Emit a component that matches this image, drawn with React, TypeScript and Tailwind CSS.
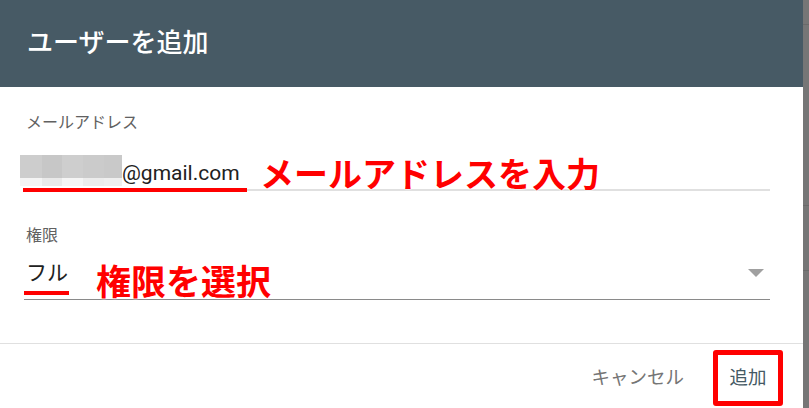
import { useState } from "react";

const jp = "font-['Roboto','Noto_Sans_CJK_JP',sans-serif]";

// pixelated blur that hides the local part of the address
const blurTop = ["bg-[#cdcdcd]", "bg-[#c7c7c7]", "bg-[#cecece]", "bg-[#cbcbcb]", "bg-[#c9c9c9]"];
const blurBottom = ["bg-[#f4f4f4]", "bg-[#e9e9e9]", "bg-[#f5f5f5]", "bg-[#ececec]", "bg-[#efefef]"];
const blurWidths = ["w-[22px]", "w-[20px]", "w-[21px]", "w-[21px]", "w-[18px]"];

function BlurBlock() {
  return (
    <div className="flex h-[31px] ml-[-4px] shrink-0">
      {blurWidths.map((w, i) => (
        <div key={i} className={`flex flex-col ${w}`}>
          <div className={`h-[23px] ${blurTop[i]}`} />
          <div className={`h-[8px] ${blurBottom[i]}`} />
        </div>
      ))}
    </div>
  );
}

function Note({ text, className }: { text: string; className: string }) {
  return (
    <span
      className={`absolute whitespace-nowrap text-[34px] leading-none font-bold text-[#ff0000] font-['Noto_Sans_CJK_JP',sans-serif] [text-shadow:0_0_2px_#fff,0_0_2px_#fff] ${className}`}
    >
      {text}
    </span>
  );
}

export default function App() {
  const [role] = useState("フル");

  return (
    <div className={`flex w-[809px] h-[408px] overflow-hidden bg-white ${jp}`}>
      <div className="flex flex-col w-[803px] h-full bg-white">
        {/* Header */}
        <div className="h-[87px] bg-[#475a65] flex items-center pl-[27px] pb-[2px]">
          <h1 className="text-white text-[26px] font-medium leading-none">ユーザーを追加</h1>
        </div>

        {/* Body */}
        <div className="flex flex-col pl-[24px] pr-[33px] pt-[28px] pb-[43px]">
          {/* Email field */}
          <label className="pl-[2px] text-[16px] leading-[16px] text-[#616161]">メールアドレス</label>
          <div className="relative mt-[24px] flex items-end pb-[3px] border-b-2 border-[#e0e0e0]">
            <BlurBlock />
            <span className="text-[21px] leading-[24px] text-[#212121] font-['Roboto',sans-serif] mb-[1px]">
              @gmail.com
            </span>
            <div className="absolute left-[-1px] bottom-[-3px] w-[224px] h-[4px] bg-[#ff0000]" />
            <Note text="メールアドレスを入力" className="left-[236px] top-[1px]" />
          </div>

          {/* Role select */}
          <label className="mt-[37px] pl-[2px] text-[16px] leading-[16px] text-[#616161]">権限</label>
          <div className="relative mt-[17px] flex items-center pb-[14px] border-b border-[#8a8a8a]">
            <span className="flex-1 pl-[2px] text-[21px] leading-[24px] text-[#212121]">{role}</span>
            <svg width="16" height="8" viewBox="0 0 16 8" className="mr-[6px] mb-[1px]">
              <path d="M0 0 L16 0 L8 8 Z" fill="#a0a0a0" />
            </svg>
            <div className="absolute left-0 top-[30px] w-[45px] h-[4px] bg-[#ff0000]" />
            <Note text="権限を選択" className="left-[72px] top-[1px] text-[35px]" />
          </div>
        </div>

        {/* Footer */}
        <div className="flex-1 border-t border-[#e0e0e0] flex items-start justify-end pt-[6px] pr-[20px]">
          <button className="mt-[17px] mr-[29px] text-[18.5px] leading-[22px] text-[#757575]">キャンセル</button>
          <button className="w-[70px] h-[56px] border-[5px] border-[#ff0000] rounded-[3px] flex items-center justify-center text-[18.5px] leading-[22px] text-[#455a64]">
            追加
          </button>
        </div>
      </div>

      {/* page behind the dialog */}
      <div className="flex-1 flex flex-col bg-[#767676]">
        <div className="h-[24px]" />
        <div className="h-[1px] bg-[#6a6a6a]" />
        <div className="h-[180px]" />
        <div className="h-[1px] bg-[#6a6a6a]" />
        <div className="h-[64px]" />
        <div className="h-[1px] bg-[#6a6a6a]" />
      </div>
    </div>
  );
}
